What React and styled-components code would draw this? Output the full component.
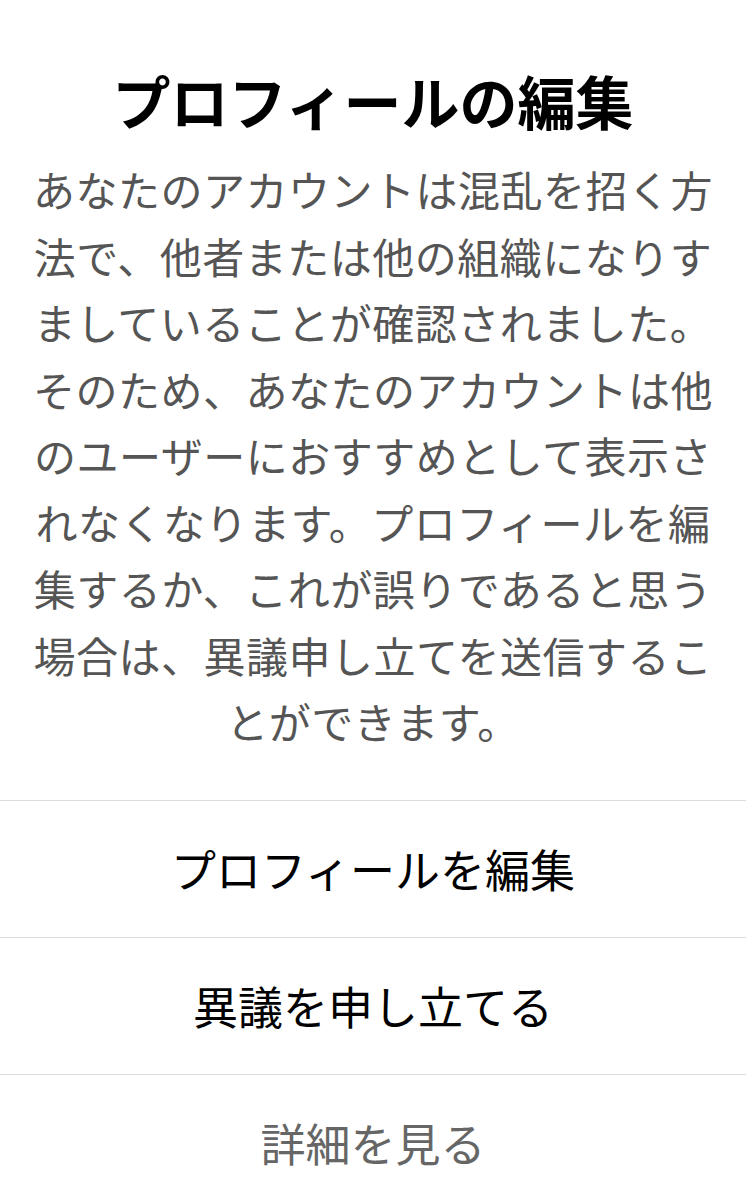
import React from "react";
import styled, { createGlobalStyle } from "styled-components";

const Global = createGlobalStyle`
  html, body { margin: 0; padding: 0; background: #ffffff; }
  body { font-family: "Noto Sans CJK JP", "Noto Sans", sans-serif; -webkit-font-smoothing: antialiased; }
`;

const Sheet = styled.div`
  width: 746px;
  display: flex;
  flex-direction: column;
  background: #fff;
`;

const Header = styled.div`
  display: flex;
  flex-direction: column;
  align-items: center;
  padding: 64px 32px 45px;
`;

const Title = styled.h1`
  margin: 0;
  font-size: 58px;
  line-height: 72px;
  font-weight: 700;
  color: #000;
  text-align: center;
`;

const Message = styled.p`
  margin: 20px 0 0;
  width: 682px;
  font-size: 42px;
  letter-spacing: 0.5px;
  line-height: 66.5px;
  color: #555555;
  text-align: center;
  line-break: strict;
`;

const Actions = styled.div`
  display: flex;
  flex-direction: column;
`;

const Action = styled.button`
  height: 137px;
  border: 0;
  border-top: 1.3px solid #dcdcdc;
  background: transparent;
  padding: 0;
  font-family: inherit;
  font-size: 45px;
  font-weight: 400;
  color: ${(p) => (p.$muted ? "#666666" : "#000000")};
  display: flex;
  align-items: center;
  justify-content: center;
  cursor: pointer;
`;

export default function App() {
  return (
    <>
      <Global />
      <Sheet>
        <Header>
          <Title>プロフィールの編集</Title>
          <Message>
            あなたのアカウントは混乱を招く方法で、他者または他の組織になりすましていることが確認されました。そのため、あなたのアカウントは他のユーザーにおすすめとして表示されなくなります。プロフィールを編集するか、これが誤りであると思う場合は、異議申し立てを送信することができます。
          </Message>
        </Header>
        <Actions>
          <Action>プロフィールを編集</Action>
          <Action>異議を申し立てる</Action>
          <Action $muted>詳細を見る</Action>
        </Actions>
      </Sheet>
    </>
  );
}
